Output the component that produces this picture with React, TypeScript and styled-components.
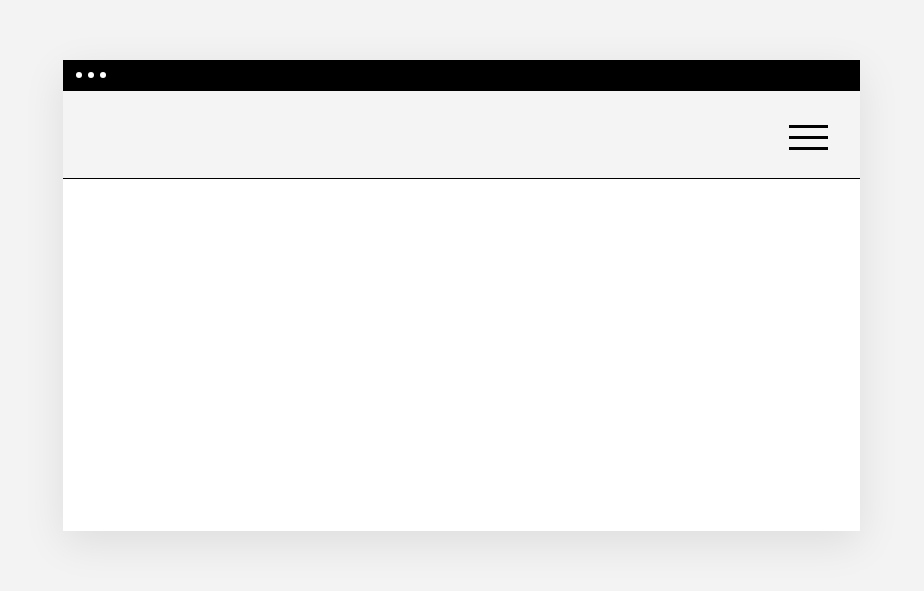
import React from "react";
import styled, { createGlobalStyle } from "styled-components";

const GlobalStyle = createGlobalStyle`
  html, body {
    margin: 0;
    padding: 0;
    background: #f3f3f3;
    font-family: "Liberation Sans", Arial, sans-serif;
  }
`;

const Page = styled.div`
  width: 100vw;
  height: 100vh;
  display: flex;
  align-items: center;
  padding-left: 63px;
  box-sizing: border-box;
`;

const Window = styled.div`
  width: 797px;
  height: 471px;
  background: #ffffff;
  display: flex;
  flex-direction: column;
  box-shadow: 0 12px 40px rgba(0, 0, 0, 0.09);
`;

const TitleBar = styled.div`
  height: 31px;
  background: #000000;
  display: flex;
  align-items: center;
  gap: 6px;
  padding: 0 0 1px 13px;
  box-sizing: border-box;
  flex-shrink: 0;
`;

const Dot = styled.span`
  width: 6px;
  height: 6px;
  border-radius: 50%;
  background: #ffffff;
`;

const Header = styled.header`
  height: 88px;
  background: #f4f4f4;
  border-bottom: 1px solid #000000;
  display: flex;
  justify-content: flex-end;
  align-items: flex-start;
  padding: 34px 32px 0 0;
  box-sizing: border-box;
  flex-shrink: 0;
`;

const MenuButton = styled.button`
  width: 39px;
  padding: 0;
  border: none;
  background: none;
  display: flex;
  flex-direction: column;
  gap: 8px;
  cursor: pointer;
`;

const MenuLine = styled.span`
  display: block;
  width: 100%;
  height: 3px;
  background: #000000;
`;

const Content = styled.main`
  flex: 1;
  background: #ffffff;
`;

const App = () => {
  return (
    <>
      <GlobalStyle />
      <Page>
        <Window>
          <TitleBar>
            <Dot />
            <Dot />
            <Dot />
          </TitleBar>
          <Header>
            <MenuButton aria-label="Menu">
              <MenuLine />
              <MenuLine />
              <MenuLine />
            </MenuButton>
          </Header>
          <Content />
        </Window>
      </Page>
    </>
  );
};

export default App;
